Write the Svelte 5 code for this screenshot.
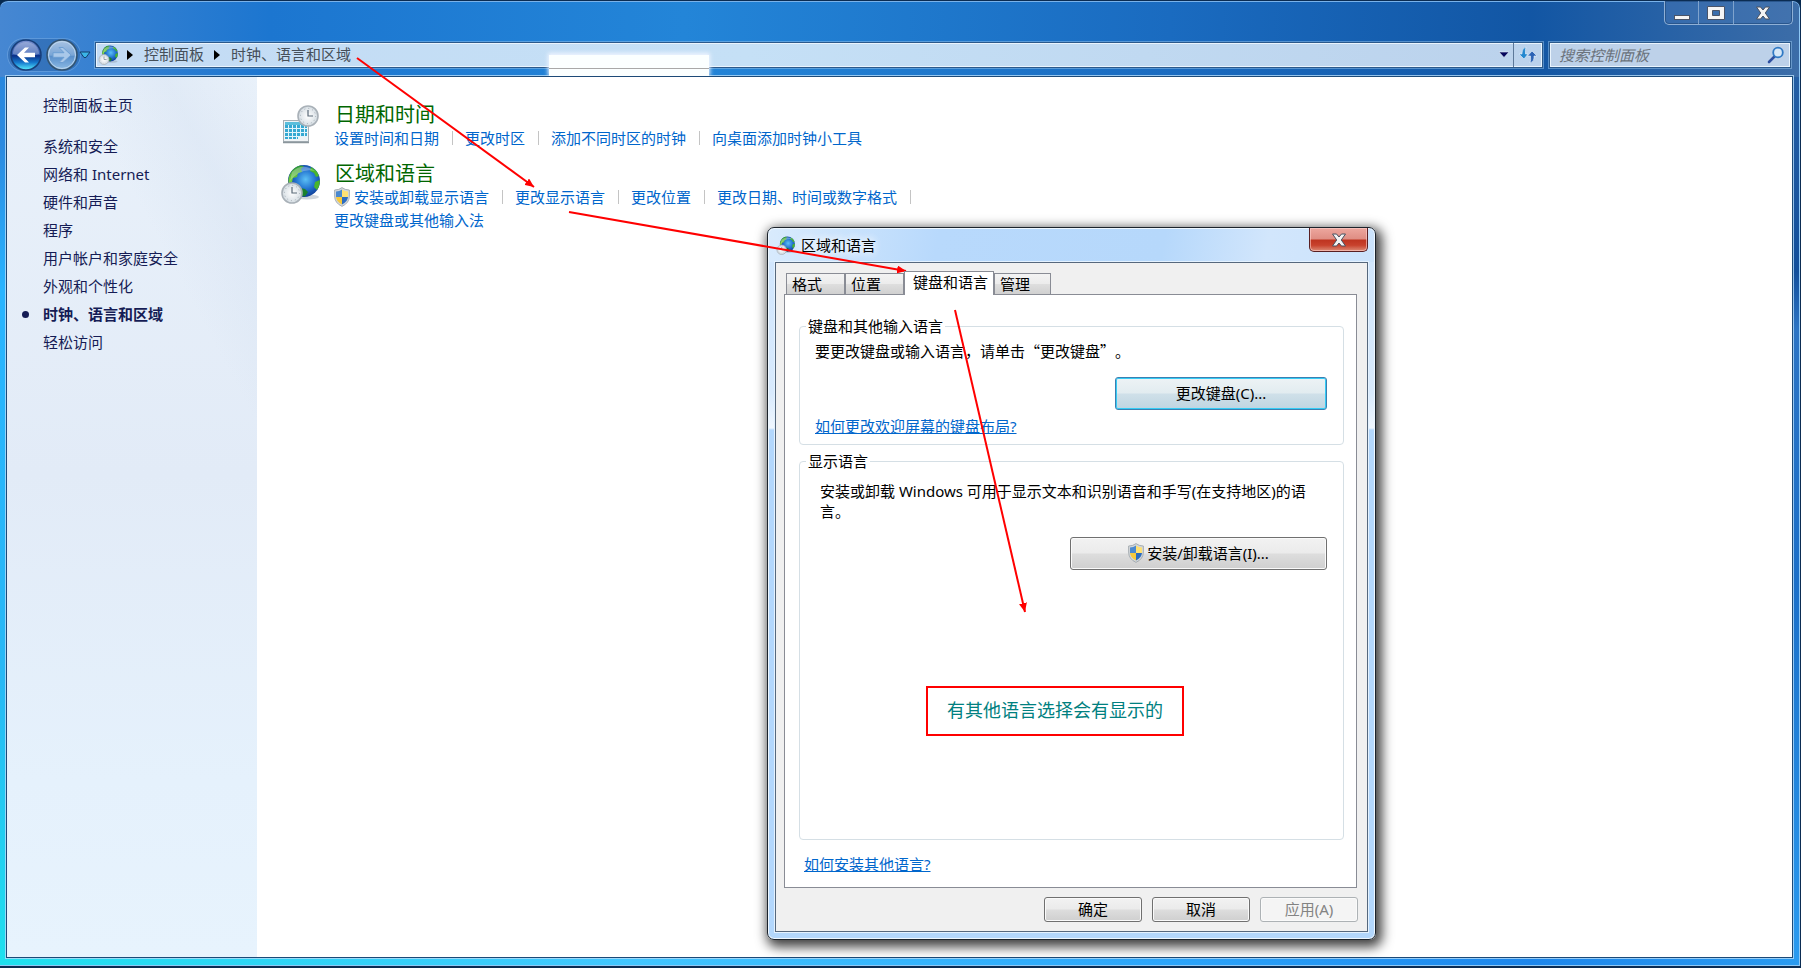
<script>
  // Control panel window (clock, language and region) with the
  // region dialog opened on its keyboards tab.

  const sidebar = [
    '系统和安全',
    '网络和 Internet',
    '硬件和声音',
    '程序',
    '用户帐户和家庭安全',
    '外观和个性化',
    '时钟、语言和区域',
    '轻松访问'
  ];
  const current = '时钟、语言和区域';

  const dateLinks = ['设置时间和日期', '更改时区', '添加不同时区的时钟', '向桌面添加时钟小工具'];
  const regionLinks = ['安装或卸载显示语言', '更改显示语言', '更改位置', '更改日期、时间或数字格式'];

  const tabs = ['格式', '位置', '键盘和语言', '管理'];
  let activeTab = $state('键盘和语言');
  let search = $state('');

  // start and end of each hint arrow
  const arrows = [
    [357, 58, 534, 187],
    [569, 212, 906, 271],
    [955, 310, 1025, 612]
  ];
</script>

{#snippet clock()}
  <circle r="10" fill="url(#clock-face)" stroke="#a9b1b8" stroke-width="1.6" />
  <circle r="7.6" fill="none" stroke="#a3adb5" stroke-width="1" stroke-dasharray="1 2.98" />
  <path d="M0 -6V0H5" fill="none" stroke="#5b6a78" stroke-width="1.2" />
{/snippet}

{#snippet globe(size)}
  <svg class="icon" width={size} height={size} viewBox="0 0 40 40" aria-hidden="true">
    <ellipse cx="27" cy="33" rx="12" ry="2.600" fill="#8d99a5" opacity=".4" />
    <circle cx="24" cy="17" r="16" fill="url(#ocean)" />
    <path d="M9.500 11Q13 3 20 1.500L24 2L21 5L22 8L18 9L17 13L13 14L12 18L8.500 19Q8 15 9.500 11Z" fill="url(#land)" />
    <path d="M31 3Q37 6 39 12L36 13L34 9L30 7ZM35 18L39.800 16Q40 22 37 26L34 23Z" fill="#49b52c" />
    <path d="M20 24L25 25L28 28L25 32.500Q20 32 17 30Z" fill="#1b812d" />
    <path d="M12 8Q22 -2 35 7Q26 5 19 9Q14 12 10 17Z" fill="#fff" opacity=".3" />
    <g transform="translate(12 29)">{@render clock()}</g>
  </svg>
{/snippet}

{#snippet shield()}
  <svg class="shield" width="16" height="20" viewBox="0 0 16 20" aria-hidden="true">
    <path d="M8 .6Q11 3 15.400 3V9Q15.400 16 8 19.400Q.6 16 .6 9V3Q5 3 8 .6Z" fill="#d3d8dc" stroke="#9ba2a7" stroke-width=".8" />
    <path d="M8 2.400V10H2V4.600Q5.500 4.300 8 2.400Z" fill="#4b89cf" />
    <path d="M8 2.400V10H14V4.600Q10.500 4.300 8 2.400Z" fill="#ffe173" />
    <path d="M2 10H8V17.500Q2.500 15 2 10Z" fill="#f6c93c" />
    <path d="M14 10H8V17.500Q13.500 15 14 10Z" fill="#2c6cc0" />
  </svg>
{/snippet}

{#snippet closeGlyph()}
  <svg width="16" height="14" viewBox="0 0 16 14" aria-hidden="true">
    <path d="M1.500 1H5.500L8 4L10.500 1H14.500L10.300 7L14.500 13H10.500L8 10L5.500 13H1.500L5.700 7Z" fill="#f3f3f3" stroke="#49505f" />
  </svg>
{/snippet}

<div class="window">
  <header>
    <div class="caption">
      <div class="caption-buttons">
        <button class="narrow" aria-label="最小化">
          <svg width="18" height="14" viewBox="0 0 18 14"><rect x="1.500" y="9.500" width="15" height="4" fill="#f5f5f5" stroke="#4a5468" /></svg>
        </button>
        <button aria-label="最大化">
          <svg width="18" height="14" viewBox="0 0 18 14"><path d="M.5.500H17.500V13.500H.5ZM5.500 4.500V9.500H12.500V4.500Z" fill="#f5f5f5" fill-rule="evenodd" stroke="#4a5468" /></svg>
        </button>
        <button class="wide" aria-label="关闭">{@render closeGlyph()}</button>
      </div>
    </div>

    <div class="navbar">
      <div class="travel">
        <button aria-label="后退">
          <svg width="32" height="32" viewBox="0 0 32 32">
            <circle cx="16" cy="16" r="15" fill="url(#back)" stroke="#173e79" stroke-width="1.500" />
            <path d="M3 15A13 12 0 0 1 29 15Q16 19 3 15Z" fill="#fff" opacity=".25" />
            <path d="M7 16L15 8.500H19L14 13.700H25V18.300H14L19 23.500H15Z" fill="#fff" />
          </svg>
        </button>
        <button aria-label="前进">
          <svg width="32" height="32" viewBox="0 0 32 32">
            <circle cx="16" cy="16" r="15" fill="url(#forward)" stroke="#33536f" stroke-width="1.500" />
            <circle cx="16" cy="16" r="13.500" fill="none" stroke="#bcd5ec" />
            <path d="M25 16L17 8.500H13L18 13.700H7V18.300H18L13 23.500H17Z" fill="#a9c8e9" stroke="#6d9fd3" />
          </svg>
        </button>
      </div>
      <button class="recent" aria-label="最近的页面">
        <svg width="12" height="8" viewBox="0 0 12 8"><path d="M1 1H11L7 6.500H5Z" fill="#3bb5e6" stroke="#123f6d" /></svg>
      </button>

      <div class="address">
        {@render globe(20)}
        <svg class="crumb-arrow" width="6" height="10" viewBox="0 0 6 10"><path d="M0 0L6 5L0 10Z" /></svg>
        <a href="#panel">控制面板</a>
        <svg class="crumb-arrow" width="6" height="10" viewBox="0 0 6 10"><path d="M0 0L6 5L0 10Z" /></svg>
        <a href="#region">时钟、语言和区域</a>
        <button class="drop" aria-label="以前的位置">
          <svg width="12" height="8" viewBox="0 0 12 8"><path d="M1 1H11L6 6.500Z" fill="#06065c" stroke="#e6f0fa" stroke-width=".6" /></svg>
        </button>
        <button class="refresh" aria-label="刷新">
          <svg width="18" height="18" viewBox="0 0 18 18">
            <path d="M7 1Q3 2 3 7V8H0L5 13L9 8H6.500Q6 4 7 1Z" fill="#2387cf" stroke="#e5f2fc" stroke-width=".6" />
            <path d="M11 17Q15 16 15 12V10H18L13 5L8.500 10H11.500Q12 14 11 17Z" fill="#2c63b5" stroke="#e5f2fc" stroke-width=".6" />
          </svg>
        </button>
      </div>

      <div class="search">
        <input type="text" aria-label="搜索控制面板" placeholder="搜索控制面板" bind:value={search} />
        <svg width="18" height="18" viewBox="0 0 18 18" aria-hidden="true">
          <path d="M2 16L8 10" stroke="#2e4fa0" stroke-width="2.600" stroke-linecap="round" />
          <circle cx="11" cy="6.500" r="4.800" fill="#d6e7f7" stroke="#2f79c4" stroke-width="1.800" />
        </svg>
      </div>
    </div>
    <div class="smudge"></div>
  </header>

  <div class="body">
    <nav>
      <a class="home" href="#home">控制面板主页</a>
      <ul>
        {#each sidebar as item}
          <li class:current={item === current}><a href="#{item}">{item}</a></li>
        {/each}
      </ul>
    </nav>

    <main>
      <section class="category">
        <svg class="icon" width="40" height="40" viewBox="0 0 40 40" aria-hidden="true">
          <rect x="3.500" y="15.500" width="25" height="21" fill="#f0f4f6" stroke="#a7b0b5" />
          <path d="M3 37.500H29" stroke="#8b969c" stroke-width="1.500" />
          <rect x="5" y="17" width="22" height="3" fill="#5bbedb" />
          <rect x="5" y="20" width="22" height="14" fill="#36a9d2" />
          <path d="M5 23.500H27M5 27.500H27M5 31.500H27M8.500 20V34M12.500 20V34M16.500 20V34M20.500 20V34M24.500 20V34" stroke="#e2f5fb" />
          <path d="M18 32H27V35H18Z" fill="#eef3f5" />
          <g transform="translate(28 11)">{@render clock()}</g>
        </svg>
        <div>
          <h2><a href="#date">日期和时间</a></h2>
          <ul class="tasks">
            {#each dateLinks as link}
              <li><a href="#{link}">{link}</a></li>
            {/each}
          </ul>
        </div>
      </section>

      <section class="category">
        {@render globe(40)}
        <div>
          <h2><a href="#lang">区域和语言</a></h2>
          <ul class="tasks open">
            {#each regionLinks as link, i}
              <li>
                {#if i === 0}{@render shield()}{/if}
                <a href="#{link}">{link}</a>
              </li>
            {/each}
          </ul>
          <a class="last" href="#ime">更改键盘或其他输入法</a>
        </div>
      </section>
    </main>
  </div>
</div>

<div class="dialog" role="dialog" aria-labelledby="dialog-title">
  <div class="titlebar">
    {@render globe(19)}
    <h1 id="dialog-title">区域和语言</h1>
    <button class="close" aria-label="关闭">{@render closeGlyph()}</button>
  </div>

  <div class="client">
    <div class="tabs" role="tablist">
      {#each tabs as tab}
        <button
          role="tab"
          aria-selected={tab === activeTab}
          class:active={tab === activeTab}
          onclick={() => (activeTab = tab)}>{tab}</button>
      {/each}
    </div>

    <div class="page" role="tabpanel">
      <fieldset>
        <legend>键盘和其他输入语言</legend>
        <div class="group">
          <p class="cjk">要更改键盘或输入语言，请单击“更改键盘”。</p>
          <button class="btn focused">更改键盘(C)...</button>
          <a class="help" href="#layout">如何更改欢迎屏幕的键盘布局?</a>
        </div>
      </fieldset>

      <fieldset class="display">
        <legend>显示语言</legend>
        <div class="group">
          <p>安装或卸载 Windows 可用于显示文本和识别语音和手写(在支持地区)的语言。</p>
          <button class="btn install">{@render shield()}安装/卸载语言(I)...</button>
        </div>
      </fieldset>

      <a class="help" href="#install">如何安装其他语言?</a>
    </div>

    <footer>
      <button class="btn small">确定</button>
      <button class="btn small">取消</button>
      <button class="btn small" disabled>应用(A)</button>
    </footer>
  </div>
</div>

<svg class="arrows" aria-hidden="true">
  <defs>
    <marker id="head" viewBox="0 0 9 8" refX="9" refY="4" markerWidth="9" markerHeight="8" markerUnits="userSpaceOnUse" orient="auto">
      <path d="M0 0L9 4L0 8Z" fill="#f00" />
    </marker>
    <radialGradient id="clock-face">
      <stop offset="0" stop-color="#fff" />
      <stop offset="1" stop-color="#d5dde3" />
    </radialGradient>
    <radialGradient id="ocean" cx=".55" cy=".45" r=".6">
      <stop offset="0" stop-color="#5cc0f5" />
      <stop offset=".5" stop-color="#2374d0" />
      <stop offset="1" stop-color="#0b2f87" />
    </radialGradient>
    <linearGradient id="land" x2="0" y2="1">
      <stop offset="0" stop-color="#2c9634" />
      <stop offset="1" stop-color="#7ed63c" />
    </linearGradient>
    <linearGradient id="back" x2="0" y2="1">
      <stop offset="0" stop-color="#7d93cf" />
      <stop offset=".48" stop-color="#2c56ad" />
      <stop offset=".52" stop-color="#0a2f87" />
      <stop offset=".75" stop-color="#1679cd" />
      <stop offset="1" stop-color="#5af0ff" />
    </linearGradient>
    <linearGradient id="forward" x2="0" y2="1">
      <stop offset="0" stop-color="#a9c4e3" />
      <stop offset=".5" stop-color="#7aa6d6" />
      <stop offset=".55" stop-color="#5a90cb" />
      <stop offset="1" stop-color="#8fbde6" />
    </linearGradient>
  </defs>
  {#each arrows as [x1, y1, x2, y2]}
    <line {x1} {y1} {x2} {y2} stroke="#f00" stroke-width="2" marker-end="url(#head)" />
  {/each}
</svg>
<p class="note">有其他语言选择会有显示的</p>

<style>
  :global(body) {
    margin: 0;
    background: #06294f;
    font: 15px/20px "Noto Sans", "Noto Sans CJK SC", sans-serif;
  }

  :global(#app) {
    position: relative;
  }

  * {
    box-sizing: border-box;
  }

  a {
    color: #0066cc;
    text-decoration: none;
  }

  button {
    padding: 0;
    border: 0;
    background: none;
    color: #000;
    font: inherit;
  }

  svg {
    display: block;
    flex: none;
  }

  ul,
  h1,
  h2,
  p {
    margin: 0;
    padding: 0;
    font-weight: normal;
    list-style: none;
  }

  .window {
    display: flex;
    flex-direction: column;
    min-height: 100vh;
    padding: 0 7px 8px 6px;
    border: 1px solid #0b2c52;
    border-width: 1px 1px 2px 0;
    border-radius: 8px 8px 0 0;
    background:
      linear-gradient(90deg, #4687d2, #1c76d0 15%, #2385d8 38%, #1a6bc0 65%, #1256a4 85%, #3c6da8) top / 100% 76px no-repeat,
      linear-gradient(90deg, #1fe0ee, #41c6ff 35%, #2ba5fb 65%, #1c86ec 85%, #2a9bf0) bottom / 100% 9px no-repeat,
      linear-gradient(#2484dc, #2b8ae0 15%, #29b4ff 30%, #28b8f5 70%, #1fe0ee) left / 50% 100% no-repeat,
      linear-gradient(#2c65a8, #124f9b 28%, #2c74c4 34%, #1b6fc8 60%, #2a9bf0) right / 50% 100% no-repeat;
    box-shadow: inset 0 1px 0 #79b2ea, inset -1px -1px 0 #8fc8f5;
  }

  header {
    position: relative;
    margin-left: -6px;
  }

  .caption {
    display: flex;
    justify-content: flex-end;
    height: 41px;
  }

  .caption-buttons {
    display: flex;
    height: 24px;
    border: 1px solid #8fb0d6;
    border-top: 0;
    border-radius: 0 0 5px 5px;
    background: rgba(80, 125, 185, .35);
    box-shadow: inset 0 0 0 1px #29568d;
  }

  .caption-buttons button {
    display: grid;
    place-items: center;
    width: 35px;
    border-right: 1px solid #7fa3cd;
  }

  .caption-buttons .narrow {
    width: 34px;
  }

  .caption-buttons .wide {
    width: 58px;
    border-right: 0;
  }

  .navbar {
    display: flex;
    align-items: center;
    height: 26px;
    margin-bottom: 8px;
    padding: 0 2px 0 8px;
  }

  .travel {
    display: flex;
    gap: 4px;
    padding: 0 2px;
    border-radius: 17px;
    background: rgba(20, 65, 125, .25);
    box-shadow: 0 0 0 1px rgba(160, 200, 240, .3);
  }

  .recent {
    margin: 0 4px 0 -1px;
  }

  .address,
  .search {
    display: flex;
    align-items: center;
    height: 26px;
    border: 1px solid #2b598b;
    background: #c3def5;
    box-shadow: inset 0 0 0 1px #eaf4fd, 0 0 0 1px rgba(150, 195, 235, .5);
  }

  .address {
    flex: 1;
    padding-left: 2px;
    background: linear-gradient(90deg, #c3dbf4, #c5e0f6 45%, #bbd2ec);
  }

  .address a {
    padding-bottom: 2px;
    color: #454f59;
  }

  .crumb-arrow {
    margin: 0 11px 0 9px;
  }

  .address a + .crumb-arrow {
    margin-left: 10px;
  }

  .drop {
    display: grid;
    place-items: center;
    width: 18px;
    margin-left: auto;
  }

  .refresh {
    display: grid;
    place-items: center;
    width: 29px;
    height: 24px;
    border-left: 1px solid #5c7899;
  }

  .search {
    width: 242px;
    margin-left: 6px;
    padding: 0 5px 0 9px;
    background: #bdd1e9;
  }

  .search input {
    flex: 1;
    min-width: 0;
    padding: 0;
    border: 0;
    outline: 0;
    background: none;
    font: inherit;
  }

  .search input::placeholder {
    color: #6b737c;
    font-style: italic;
    opacity: 1;
  }

  /* blanked-out patch across the address bar */
  .smudge {
    position: absolute;
    top: 54px;
    left: 549px;
    width: 160px;
    height: 21px;
    background: linear-gradient(#fbffff 13px, #a8a8a8 13px, #a8a8a8 14px, #fbffff 14px);
    box-shadow: 0 -1px 4px 1px #eff4ff;
    clip-path: inset(-6px -6px 0);
  }

  .body {
    display: flex;
    flex: 1;
    border: 1px solid #1c4a78;
    background: #fff;
    box-shadow: 0 0 0 1px rgba(180, 220, 250, .8);
  }

  nav {
    width: 250px;
    padding: 18px 0 0 36px;
    background:
      linear-gradient(62deg, transparent 60%, rgba(205, 219, 238, .3) 80%, transparent) top / 100% 400px no-repeat,
      linear-gradient(#e9f1fa, #e2ebf7 45%, #e5f1fc 80%, #e7f3fd);
  }

  nav a {
    color: #151c55;
  }

  nav ul {
    margin-top: 17px;
  }

  nav li {
    display: flex;
    align-items: center;
    height: 28px;
  }

  nav li.current {
    font-weight: bold;
  }

  nav li.current::before {
    content: "";
    width: 7px;
    height: 7px;
    margin: 0 14px 0 -21px;
    border-radius: 50%;
    background: #151c55;
  }

  main {
    padding: 24px 0 0 23px;
  }

  .category {
    display: flex;
    gap: 14px;
    margin-bottom: 13px;
  }

  .category .icon {
    margin-top: 4px;
    margin-bottom: -4px;
  }

  h2 {
    padding-left: 1px;
    font-size: 20px;
    line-height: 28px;
  }

  h2 a {
    color: #006600;
  }

  .tasks {
    display: flex;
    height: 18px;
    align-items: center;
  }

  .tasks li {
    display: flex;
    align-items: center;
  }

  .tasks li:not(:last-child)::after,
  .tasks.open li::after {
    content: "";
    width: 1px;
    height: 14px;
    margin: 0 12px 0 13px;
    background: #c4c4c4;
  }

  .tasks .shield {
    margin-right: 4px;
  }

  .last {
    display: block;
    margin-top: 4px;
  }

  .dialog {
    position: absolute;
    top: 227px;
    left: 767px;
    width: 609px;
    padding: 0 7px 7px;
    border: 1px solid #1c232b;
    border-radius: 7px;
    background:
      linear-gradient(100deg, #d9ebfd, #b8d9fc 28%, #b6d8fb 65%, #d2e6fc 82%, #cbe3fc) top / 100% 34px no-repeat,
      linear-gradient(#cfe5fd, #d8eafd 165px, #f0f7ff 200px, #b3d7fc 202px);
    box-shadow: inset 0 0 0 1px #eef7ff, 3px 4px 12px 3px rgba(0, 0, 0, .75);
  }

  .titlebar {
    display: flex;
    align-items: center;
    height: 34px;
    padding-left: 1px;
  }

  h1 {
    margin-left: 6px;
    font-size: 15px;
    line-height: 20px;
    text-shadow: 0 0 8px #fff, 0 0 8px #fff;
  }

  .close {
    display: grid;
    place-items: center;
    align-self: flex-start;
    width: 59px;
    height: 24px;
    margin-left: auto;
    border: 1px solid #591f22;
    border-top: 0;
    border-radius: 0 0 5px 5px;
    background: linear-gradient(#eda79f, #df8d83 48%, #be3420 52%, #c8422d 75%, #dc8b76);
    box-shadow: inset 0 0 0 1px rgba(255, 210, 205, .6);
  }

  .client {
    padding: 0 9px 9px 8px;
    border: 1px solid #56687d;
    background: #f0f0f0;
    box-shadow: 0 0 0 1px #e4f2ff;
  }

  .tabs {
    display: flex;
    align-items: flex-end;
    height: 32px;
    padding-left: 2px;
  }

  .tabs button {
    width: 59px;
    height: 22px;
    padding: 0 0 2px 5px;
    border: 1px solid #898c95;
    background: linear-gradient(#f3f3f3, #ececec 48%, #dedede 52%, #d0d0d0);
    text-align: left;
  }

  .tabs button:last-child {
    width: 57px;
  }

  .tabs button.active {
    z-index: 1;
    width: 90px;
    height: 24px;
    padding: 0 0 4px 8px;
    border-bottom: 0;
    background: #fff;
  }

  .page {
    margin: -1px 1px 0 0;
    padding: 21px 12px 13px 14px;
    border: 1px solid #898c95;
    background: #fff;
  }

  fieldset {
    min-width: 0;
    margin: 0 0 6px;
    padding: 0;
    border: 1px solid #d5dfe5;
    border-radius: 4px;
  }

  legend {
    margin-left: 6px;
    padding: 0 2px;
  }

  .group {
    display: flex;
    flex-direction: column;
    align-items: flex-start;
    padding: 5px 16px 8px 15px;
  }

  /* full-width quotes and stops */
  .cjk {
    font-family: "Noto Sans CJK SC", sans-serif;
    text-spacing-trim: space-all;
  }

  .display {
    min-height: 389px;
    margin-bottom: 14px;
  }

  .display .group {
    padding: 10px 16px 0 20px;
  }

  .btn {
    display: flex;
    align-items: center;
    justify-content: center;
    align-self: flex-end;
    width: 212px;
    height: 33px;
    margin-top: 16px;
    padding-bottom: 2px;
    border: 1px solid #707070;
    border-radius: 3px;
    background: linear-gradient(#f2f2f2, #ebebeb 48%, #dddddd 52%, #cfcfcf);
    box-shadow: inset 0 0 0 1px #fafafa;
  }

  .btn.focused {
    margin-bottom: 6px;
    border-color: #3c7fb1;
    background: linear-gradient(#edf3f5, #e2ecf0 48%, #cfe0e9 52%, #bfd5e1);
    box-shadow: inset 0 0 0 1px #35ccf5;
  }

  .btn.install {
    width: 257px;
  }

  .btn .shield {
    margin-right: 3px;
  }

  .help {
    display: block;
    text-decoration: underline;
  }

  .page > .help {
    padding-left: 5px;
  }

  footer {
    display: flex;
    justify-content: flex-end;
    gap: 10px;
    margin-top: 9px;
  }

  .btn.small {
    width: 98px;
    height: 25px;
    margin: 0;
  }

  .btn:disabled {
    border-color: #adb2b5;
    background: #f4f4f4;
    color: #838383;
  }

  .arrows {
    position: absolute;
    top: 0;
    left: 0;
    width: 100%;
    height: 100%;
    pointer-events: none;
  }

  .note {
    position: absolute;
    top: 686px;
    left: 926px;
    padding: 12px 19px 14px;
    border: 2px solid #ff0000;
    color: #008080;
    font-size: 18px;
    line-height: 20px;
  }
</style>
